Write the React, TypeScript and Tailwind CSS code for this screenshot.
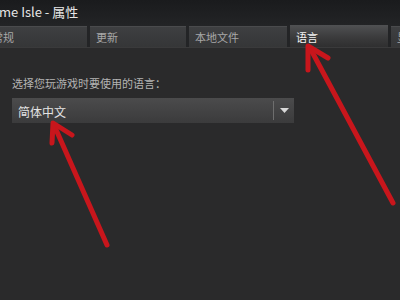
import React from "react";

const tabs = [
  { label: "常规", w: "w-[101px]", ml: "ml-[-14px]" },
  { label: "更新", w: "w-[96px]", ml: "" },
  { label: "本地文件", w: "w-[98px]", ml: "" },
];

export default function App() {
  return (
    <div
      className="relative w-[400px] h-[300px] overflow-hidden bg-[#2a2a2b] flex flex-col"
      style={{ fontFamily: '"Noto Sans CJK SC", "Liberation Sans", sans-serif' }}
    >
      {/* header */}
      <div className="h-[26px] bg-gradient-to-b from-[#1a1b1d] to-[#232426] flex items-start pt-[3px]">
        <span className="text-[13px] leading-[18px] text-[#e6e6e6] ml-[-1px] whitespace-nowrap">
          me Isle - 属性
        </span>
      </div>
      {/* tabs */}
      <div className="h-[21px] bg-[#232426] flex items-stretch gap-[3px]">
        {tabs.map((t) => (
          <div
            key={t.label}
            className={`${t.w} ${t.ml} shrink-0 bg-gradient-to-b from-[#3e3f41] to-[#353637] border-t border-[#4a4b4d] flex items-center pl-[6px] text-[11px] text-[#a8a8a8] whitespace-nowrap`}
          >
            {t.label}
          </div>
        ))}
        <div className="w-[98px] shrink-0 mt-[-1px] mb-[-4px] bg-gradient-to-b from-[#505153] via-[#3a3a3b] to-[#2a2a2b] flex items-start pt-[4px] pl-[6px] text-[11px] text-[#f2f2f2] whitespace-nowrap">
          语言
        </div>
        <div className="w-[40px] shrink-0 bg-gradient-to-b from-[#3e3f41] to-[#353637] border-t border-[#4a4b4d] flex items-center pl-[6px] text-[11px] text-[#a8a8a8] whitespace-nowrap">
          显示
        </div>
      </div>
      {/* content */}
      <div className="flex-1 border-t border-[#3a3a3b] bg-[#2a2a2b] pt-[27px] px-[12px] flex flex-col">
        <div className="text-[11px] leading-[16px] text-[#b4b4b4] whitespace-nowrap">
          选择您玩游戏时要使用的语言：
        </div>
        <div className="mt-[7px] w-[282px] h-[25px] bg-gradient-to-b from-[#4b4b4c] to-[#3b3b3c] flex items-center">
          <span className="flex-1 pl-[6px] pt-[3px] text-[12px] text-[#e4e4e4]">简体中文</span>
          <div className="w-[1px] h-[19px] bg-[#6e6e6e]" />
          <div className="w-[20px] flex items-center justify-center">
            <svg width="9" height="5" viewBox="0 0 9 5">
              <path d="M0 0 L9 0 L4.5 5 Z" fill="#d8d8d8" />
            </svg>
          </div>
        </div>
      </div>
      {/* arrows overlay */}
      <svg className="absolute inset-0 pointer-events-none" width="400" height="300" viewBox="0 0 400 300">
        <g stroke="#c8161c" strokeWidth="5" strokeLinecap="round" strokeLinejoin="round" fill="none">
          <line x1="107" y1="245" x2="54" y2="125" />
          <polyline points="52,143 53,123 72,135" />
          <line x1="393" y1="203" x2="310" y2="48" />
          <polyline points="308,70 308,46 328,58" />
        </g>
      </svg>
    </div>
  );
}
